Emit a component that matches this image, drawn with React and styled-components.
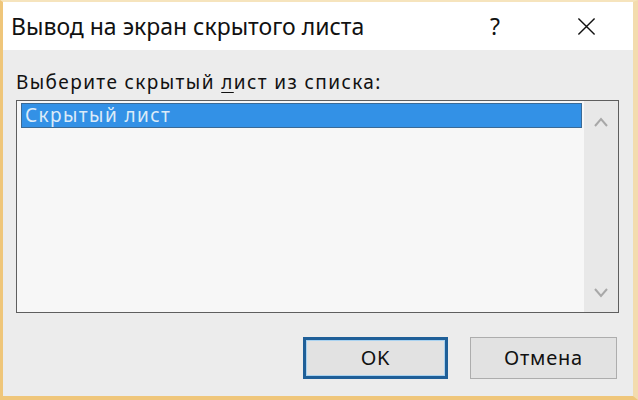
import React from "react";
import styled, { createGlobalStyle } from "styled-components";

const Global = createGlobalStyle`
  html, body {
    margin: 0;
    padding: 0;
    background: #ffffff;
  }
  * {
    box-sizing: border-box;
  }
`;

const App = () => {
  return (
    <>
      <Global />
      <Window>
        <TitleBar>
          <Title>Вывод на экран скрытого листа</Title>
          <TitleButton $w={88}>?</TitleButton>
          <TitleButton $w={94}>
            <svg width="19" height="19" viewBox="0 0 20 20">
              <path d="M1.5 1.5 L18.5 18.5 M18.5 1.5 L1.5 18.5" stroke="#111" strokeWidth="1.5" fill="none" />
            </svg>
          </TitleButton>
        </TitleBar>
        <Body>
          <Label>
            Выберите скрытый <u>л</u>ист из списка:
          </Label>
          <ListBox>
            <Items>
              <Item $selected>Скрытый лист</Item>
            </Items>
            <ScrollBar>
              <Arrow viewBox="0 0 14 10">
                <path d="M1 9 L7 2 L13 9" stroke="#a8a8a8" strokeWidth="2" fill="none" />
              </Arrow>
              <Arrow viewBox="0 0 14 10">
                <path d="M1 1 L7 8 L13 1" stroke="#a8a8a8" strokeWidth="2" fill="none" />
              </Arrow>
            </ScrollBar>
          </ListBox>
          <Buttons>
            <Button $default>OK</Button>
            <Button>Отмена</Button>
          </Buttons>
        </Body>
      </Window>
    </>
  );
};

export default App;

const Window = styled.div`
  width: 638px;
  height: 400px;
  display: flex;
  flex-direction: column;
  border-top: 2px solid #f6e4bd;
  border-left: 3px solid #efc67a;
  border-right: 5px solid #f3dcae;
  border-bottom: 4px solid #efc67a;
  font-family: "Noto Sans", "Open Sans", sans-serif;
  color: #111;
`;

const TitleBar = styled.div`
  height: 48px;
  flex-shrink: 0;
  display: flex;
  align-items: center;
  background: #ffffff;
  padding-left: 8px;
`;

const Title = styled.div`
  flex: 1;
  font-size: 23px;
  line-height: 30px;
`;

const TitleButton = styled.div`
  width: ${(p) => p.$w}px;
  height: 100%;
  display: flex;
  align-items: center;
  justify-content: center;
  font-size: 23px;
`;

const Body = styled.div`
  flex: 1;
  background: #ececec;
  padding: 20px 16px 0 13px;
  display: flex;
  flex-direction: column;
`;

const Label = styled.div`
  font-size: 19px;
  letter-spacing: 1.4px;
  line-height: 24px;
  height: 30px;
  u {
    text-underline-offset: 3px;
  }
`;

const ListBox = styled.div`
  width: 603px;
  height: 213px;
  border: 1px solid #5e5e5e;
  background: #f7f7f7;
  display: flex;
`;

const Items = styled.div`
  flex: 1;
  padding: 2px 2px 0 4px;
`;

const Item = styled.div`
  height: 25px;
  line-height: 22px;
  font-size: 19px;
  letter-spacing: 1.4px;
  padding-left: 3px;
  border: 1px solid #3a6a96;
  background: ${(p) => (p.$selected ? "#3391e6" : "transparent")};
  color: ${(p) => (p.$selected ? "#dcebf8" : "#111")};
`;

const ScrollBar = styled.div`
  width: 34px;
  background: #e8e8e8;
  display: flex;
  flex-direction: column;
  justify-content: space-between;
  align-items: center;
  padding: 16px 0 14px;
`;

const Arrow = styled.svg`
  width: 14px;
  height: 10px;
`;

const Buttons = styled.div`
  display: flex;
  justify-content: flex-end;
  gap: 22px;
  margin-top: 24px;
`;

const Button = styled.div`
  width: ${(p) => (p.$default ? 145 : 147)}px;
  height: 42px;
  display: flex;
  align-items: center;
  justify-content: center;
  font-size: 20px;
  letter-spacing: 0.8px;
  background: #e2e2e2;
  border: ${(p) => (p.$default ? "3px solid #1f5f98" : "1px solid #adadad")};
  box-shadow: ${(p) => (p.$default ? "inset 0 0 0 1px #a9d2f0" : "none")};
  padding-bottom: 2px;
`;
